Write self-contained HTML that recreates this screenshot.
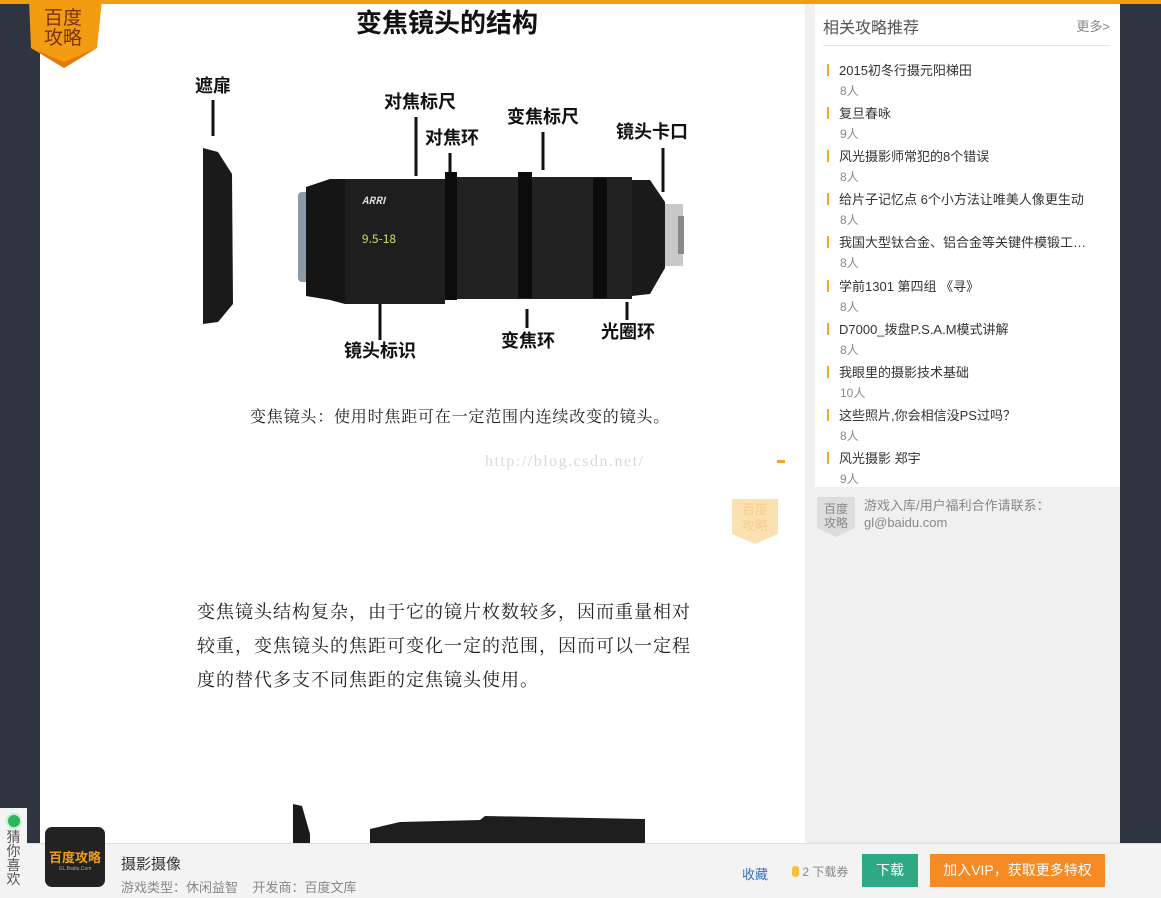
<!DOCTYPE html>
<html><head><meta charset="utf-8"><style>
*{margin:0;padding:0;box-sizing:border-box}
body{width:1161px;height:898px;overflow:hidden;background:#2f3540;font-family:"Liberation Sans","Noto Sans CJK SC",sans-serif;position:relative}
.top{position:absolute;left:0;top:0;width:1161px;height:4px;background:#f39c12}
.main{position:absolute;left:40px;top:4px;width:765px;height:894px;background:#fff}
.gap{position:absolute;left:805px;top:4px;width:10px;height:894px;background:#f0f0f0}
.side{position:absolute;left:815px;top:4px;width:305px;height:894px;background:#f0f0f0}
.panel{position:absolute;left:0;top:0;width:305px;height:483px;background:#fff}
.sh{position:absolute;left:8px;top:10px;font-size:16px;color:#555}
.more{position:absolute;right:10px;top:12px;font-size:13px;color:#888}
.hr{position:absolute;left:8px;right:10px;top:41px;border-top:1px solid #e4e4e4}
.it{position:absolute;left:12px;font-size:13px;color:#333}
.it b{display:inline-block;width:2px;height:12px;background:#f5a623;margin-right:10px;vertical-align:-1px}
.it i{display:block;font-style:normal;font-size:12px;color:#888;margin-left:13px;margin-top:3px}
.bar{position:absolute;left:27px;top:843px;width:1134px;height:55px;background:#f3f3f3;border-top:1px solid #ddd}
.cai{position:absolute;left:0;top:808px;width:27px;height:90px;background:#f4f4f4;font-size:14px;color:#555;text-align:center;line-height:14px}
</style></head><body>
<div class="top"></div>
<div class="main">
<svg width="765" height="894" style="position:absolute;left:0;top:0" font-family="Noto Sans CJK SC,sans-serif" font-weight="bold">
<text x="407" y="28" font-size="26" text-anchor="middle" fill="#111">变焦镜头的结构</text>
<g fill="#111" font-size="18" text-anchor="middle">
<text x="173" y="88">遮扉</text><text x="380" y="104">对焦标尺</text><text x="412" y="140">对焦环</text>
<text x="503" y="119">变焦标尺</text><text x="612" y="134">镜头卡口</text><text x="340" y="353">镜头标识</text>
<text x="488" y="343">变焦环</text><text x="588" y="334">光圈环</text></g>
<g stroke="#111" stroke-width="3">
<line x1="173" y1="96" x2="173" y2="132"/><line x1="376" y1="113" x2="376" y2="172"/><line x1="410" y1="149" x2="410" y2="168"/>
<line x1="503" y1="128" x2="503" y2="166"/><line x1="623" y1="144" x2="623" y2="188"/><line x1="340" y1="300" x2="340" y2="336"/>
<line x1="487" y1="305" x2="487" y2="324"/><line x1="587" y1="298" x2="587" y2="316"/></g>
<path d="M163 144 L178 148 L192 170 L193 300 L178 318 L163 320 Z" fill="#1a1a1a"/>
<rect x="258" y="188" width="12" height="90" rx="4" fill="#8a9aa6"/>
<path d="M266 183 L290 175 L305 175 L305 300 L290 296 L266 292 Z" fill="#151515"/>
<rect x="305" y="175" width="100" height="125" fill="#1e1e1e"/>
<rect x="405" y="168" width="12" height="128" fill="#0c0c0c"/>
<rect x="417" y="173" width="175" height="122" fill="#222"/>
<rect x="478" y="168" width="14" height="126" fill="#0c0c0c"/>
<rect x="553" y="174" width="14" height="120" fill="#0c0c0c"/>
<path d="M592 176 L610 176 L625 198 L625 264 L610 290 L592 292 Z" fill="#1a1a1a"/>
<rect x="625" y="200" width="18" height="62" fill="#c8c8c8"/><rect x="638" y="212" width="6" height="38" fill="#888"/>
<text x="322" y="200" font-size="10" fill="#ddd" font-style="italic">ARRI</text>
<text x="339" y="239" font-size="12" fill="#cfe05a" text-anchor="middle" font-weight="normal">9.5-18</text>
<text x="445" y="462" font-size="16" fill="#d8d8d8" font-weight="normal" font-family="Liberation Serif,serif" letter-spacing="1.5">http://blog.csdn.net/</text>
<rect x="737" y="456" width="8" height="3" fill="#f5a623"/>
<text x="210" y="418" font-size="16" fill="#222" font-weight="normal" font-family="Noto Serif CJK SC,serif" letter-spacing="0.8">变焦镜头：使用时焦距可在一定范围内连续改变的镜头。</text>
<path d="M692 495 L738 495 L738 530 L715 540 L692 530 Z" fill="#fbe0b0"/>
<text x="715" y="510" font-size="13" fill="#f7cf8f" text-anchor="middle" font-weight="normal">百度</text>
<text x="715" y="526" font-size="13" fill="#f7cf8f" text-anchor="middle" font-weight="normal">攻略</text>
<g font-size="18" fill="#222" font-weight="normal" font-family="Noto Serif CJK SC,serif" letter-spacing="1">
<text x="157" y="614">变焦镜头结构复杂，由于它的镜片枚数较多，因而重量相对</text>
<text x="157" y="648">较重，变焦镜头的焦距可变化一定的范围，因而可以一定程</text>
<text x="157" y="682">度的替代多支不同焦距的定焦镜头使用。</text></g>
<path d="M253 800 L262 802 L270 830 L270 840 L253 840 Z" fill="#1a1a1a"/>
<path d="M330 825 L360 818 L440 816 L445 812 L605 815 L605 840 L330 840 Z" fill="#1e1e1e"/>
</svg>
</div>
<div class="gap"></div>
<div class="side">
<div class="panel">
<div class="sh">相关攻略推荐</div><div class="more">更多&gt;</div><div class="hr"></div>
<div class="it" style="top:56px"><b></b>2015初冬行摄元阳梯田<i>8人</i></div>
<div class="it" style="top:99px"><b></b>复旦春咏<i>9人</i></div>
<div class="it" style="top:142px"><b></b>风光摄影师常犯的8个错误<i>8人</i></div>
<div class="it" style="top:185px"><b></b>给片子记忆点 6个小方法让唯美人像更生动<i>8人</i></div>
<div class="it" style="top:228px"><b></b>我国大型钛合金、铝合金等关键件模锻工…<i>8人</i></div>
<div class="it" style="top:272px"><b></b>学前1301 第四组 《寻》<i>8人</i></div>
<div class="it" style="top:315px"><b></b>D7000_拨盘P.S.A.M模式讲解<i>8人</i></div>
<div class="it" style="top:358px"><b></b>我眼里的摄影技术基础<i>10人</i></div>
<div class="it" style="top:401px"><b></b>这些照片,你会相信没PS过吗？<i>8人</i></div>
<div class="it" style="top:444px"><b></b>风光摄影 郑宇<i>9人</i></div>
</div>
<svg style="position:absolute;left:0;top:490px" width="44" height="44"><path d="M2 3 L40 3 L40 34 L21 43 L2 34 Z" fill="#ddd"/><text x="21" y="19" font-size="12" fill="#888" text-anchor="middle" font-family="Noto Sans CJK SC">百度</text><text x="21" y="33" font-size="12" fill="#888" text-anchor="middle" font-family="Noto Sans CJK SC">攻略</text></svg>
<div style="position:absolute;left:49px;top:493px;font-size:13px;color:#888;line-height:17px">游戏入库/用户福利合作请联系：<br>gl@baidu.com</div>
</div>
<svg style="position:absolute;left:25px;top:0" width="80" height="70"><path d="M4 0 L77 0 L72 48 L39 68 L6 48 Z" fill="#f39c12"/><path d="M6 48 L39 68 L72 48 L39 62Z" fill="#e07b0b"/><text x="38" y="24" font-size="19" fill="#7a3300" text-anchor="middle" font-family="Noto Sans CJK SC">百度</text><text x="38" y="44" font-size="19" fill="#7a3300" text-anchor="middle" font-family="Noto Sans CJK SC">攻略</text></svg>
<div class="bar">
<div style="position:absolute;left:18px;top:-17px;width:60px;height:60px;background:#222;border-radius:7px"><div style="color:#f39c12;font-weight:bold;font-size:13px;text-align:center;margin-top:20px">百度攻略</div><div style="color:#aaa;font-size:5px;text-align:center">GL.Baidu.Com</div></div>
<div style="position:absolute;left:94px;top:9px;font-size:15px;color:#333">摄影摄像</div>
<div style="position:absolute;left:94px;top:33px;font-size:13px;color:#888">游戏类型：休闲益智&nbsp;&nbsp;&nbsp;&nbsp;开发商：百度文库</div>
<div style="position:absolute;left:715px;top:20px;font-size:13px;color:#3b6fb6">收藏</div>
<div style="position:absolute;left:765px;top:19px;font-size:12px;color:#888"><span style="display:inline-block;width:7px;height:11px;background:#f5c040;border-radius:3px;vertical-align:-1px"></span> 2 下载券</div>
<div style="position:absolute;left:835px;top:10px;width:56px;height:33px;background:#2daa84;color:#fff;font-size:14px;text-align:center;line-height:33px">下载</div>
<div style="position:absolute;left:903px;top:10px;width:175px;height:33px;background:#f68a25;color:#fff;font-size:14px;text-align:center;line-height:33px">加入VIP，获取更多特权</div>
</div>
<div class="cai"><div style="width:12px;height:12px;border-radius:50%;background:#2db55d;margin:7px auto 3px;box-shadow:0 0 0 2px #c8eed4"></div>猜<br>你<br>喜<br>欢</div>
</body></html>
